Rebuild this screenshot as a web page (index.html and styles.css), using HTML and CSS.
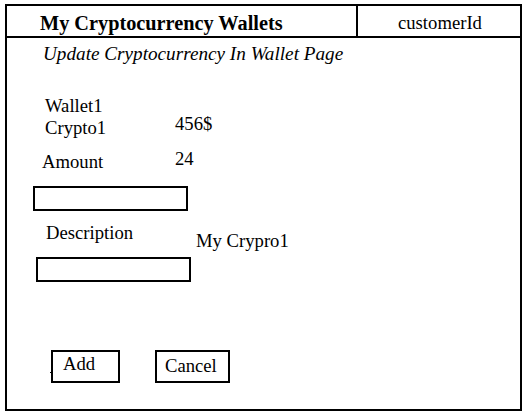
FILE: index.html
```html
<!DOCTYPE html>
<html lang="en">
<head>
<meta charset="utf-8">
<title>My Cryptocurrency Wallets</title>
<link rel="stylesheet" href="styles.css">
</head>
<body>
<div class="frame">
  <header class="head">
    <div class="title-cell"><h1 class="title">My Cryptocurrency Wallets</h1></div>
    <div class="user-cell">customerId</div>
  </header>
  <main class="content">
    <h2 class="subtitle">Update Cryptocurrency In Wallet Page</h2>
    <div class="row row-wallet">
      <div class="labels">
        <div class="txt wallet">Wallet1</div>
        <div class="txt crypto">Crypto1</div>
      </div>
      <div class="txt value v-price">456$</div>
    </div>
    <div class="row row-amount">
      <label class="txt label amount" for="amount">Amount</label>
      <div class="txt value v-amount">24</div>
    </div>
    <input class="field field-amount" id="amount" type="text">
    <div class="row row-desc">
      <label class="txt label desc" for="desc">Description</label>
      <div class="txt value v-desc">My Crypro1</div>
    </div>
    <input class="field field-desc" id="desc" type="text">
    <div class="actions">
      <button class="btn btn-add" type="button">Add</button>
      <button class="btn btn-cancel" type="button">Cancel</button>
    </div>
  </main>
</div>
</body>
</html>
```
FILE: styles.css
```css
html, body {
  margin: 0;
  padding: 0;
  background: #ffffff;
}

body {
  font-family: "Liberation Serif", "Times New Roman", serif;
  color: #000000;
  font-size: 18.67px;
  line-height: 1;
}

.frame {
  box-sizing: border-box;
  width: 517px;
  height: 407px;
  margin: 4px 0 0 5px;
  border: 2px solid #000;
  display: flex;
  flex-direction: column;
}

.head {
  display: flex;
  height: 32px;
  box-sizing: border-box;
  border-bottom: 2px solid #000;
}

.title-cell {
  box-sizing: border-box;
  width: 351px;
  border-right: 2px solid #000;
  padding: 7px 0 0 33px;
}

.title {
  margin: 0;
  font-size: 20.3px;
  font-weight: bold;
  line-height: 1;
}

.user-cell {
  padding: 8.4px 0 0 40px;
}

.content {
  display: flex;
  flex-direction: column;
  align-items: flex-start;
}

.subtitle {
  margin: 6.1px 0 0 36px;
  font-size: 19.2px;
  font-weight: normal;
  font-style: italic;
  line-height: 1;
}

.txt {
  display: block;
  line-height: 1;
}

.row {
  display: flex;
  align-items: flex-start;
}

.row-wallet {
  margin-top: 34.1px;
}

.labels {
  display: flex;
  flex-direction: column;
  gap: 3.33px;
  margin-left: 38px;
  width: 130px;
}

.v-price {
  margin-top: 18px;
}

.row-amount {
  margin-top: 12.33px;
}

.amount {
  margin: 3px 0 0 35px;
  width: 133px;
}

.field {
  box-sizing: border-box;
  width: 155px;
  height: 25px;
  border: 2px solid #000;
  border-radius: 0;
  background: #fff;
  padding: 0;
  margin: 0;
  font: inherit;
}

.field-amount {
  margin: 13.93px 0 0 26px;
}

.row-desc {
  margin-top: 13.4px;
}

.desc {
  margin-left: 39px;
  width: 150px;
}

.v-desc {
  margin-top: 8px;
}

.field-desc {
  margin: 5.93px 0 0 29px;
}

.actions {
  display: flex;
  gap: 35px;
  margin: 68px 0 0 44px;
}

.btn {
  box-sizing: border-box;
  border: 2px solid #000;
  border-radius: 0;
  background: #fff;
  color: #000;
  font: inherit;
  line-height: 1;
  text-align: left;
  margin: 0;
  display: block;
  align-self: flex-start;
}

.btn-add {
  width: 69px;
  padding: 2.9px 0 7.43px 10px;
  position: relative;
}

.btn-add::before {
  content: "";
  position: absolute;
  left: -3px;
  top: 20px;
  width: 2px;
  height: 1px;
  background: #000;
}

.btn-cancel {
  width: 75px;
  padding: 4.9px 0 5.43px 8px;
}
```
